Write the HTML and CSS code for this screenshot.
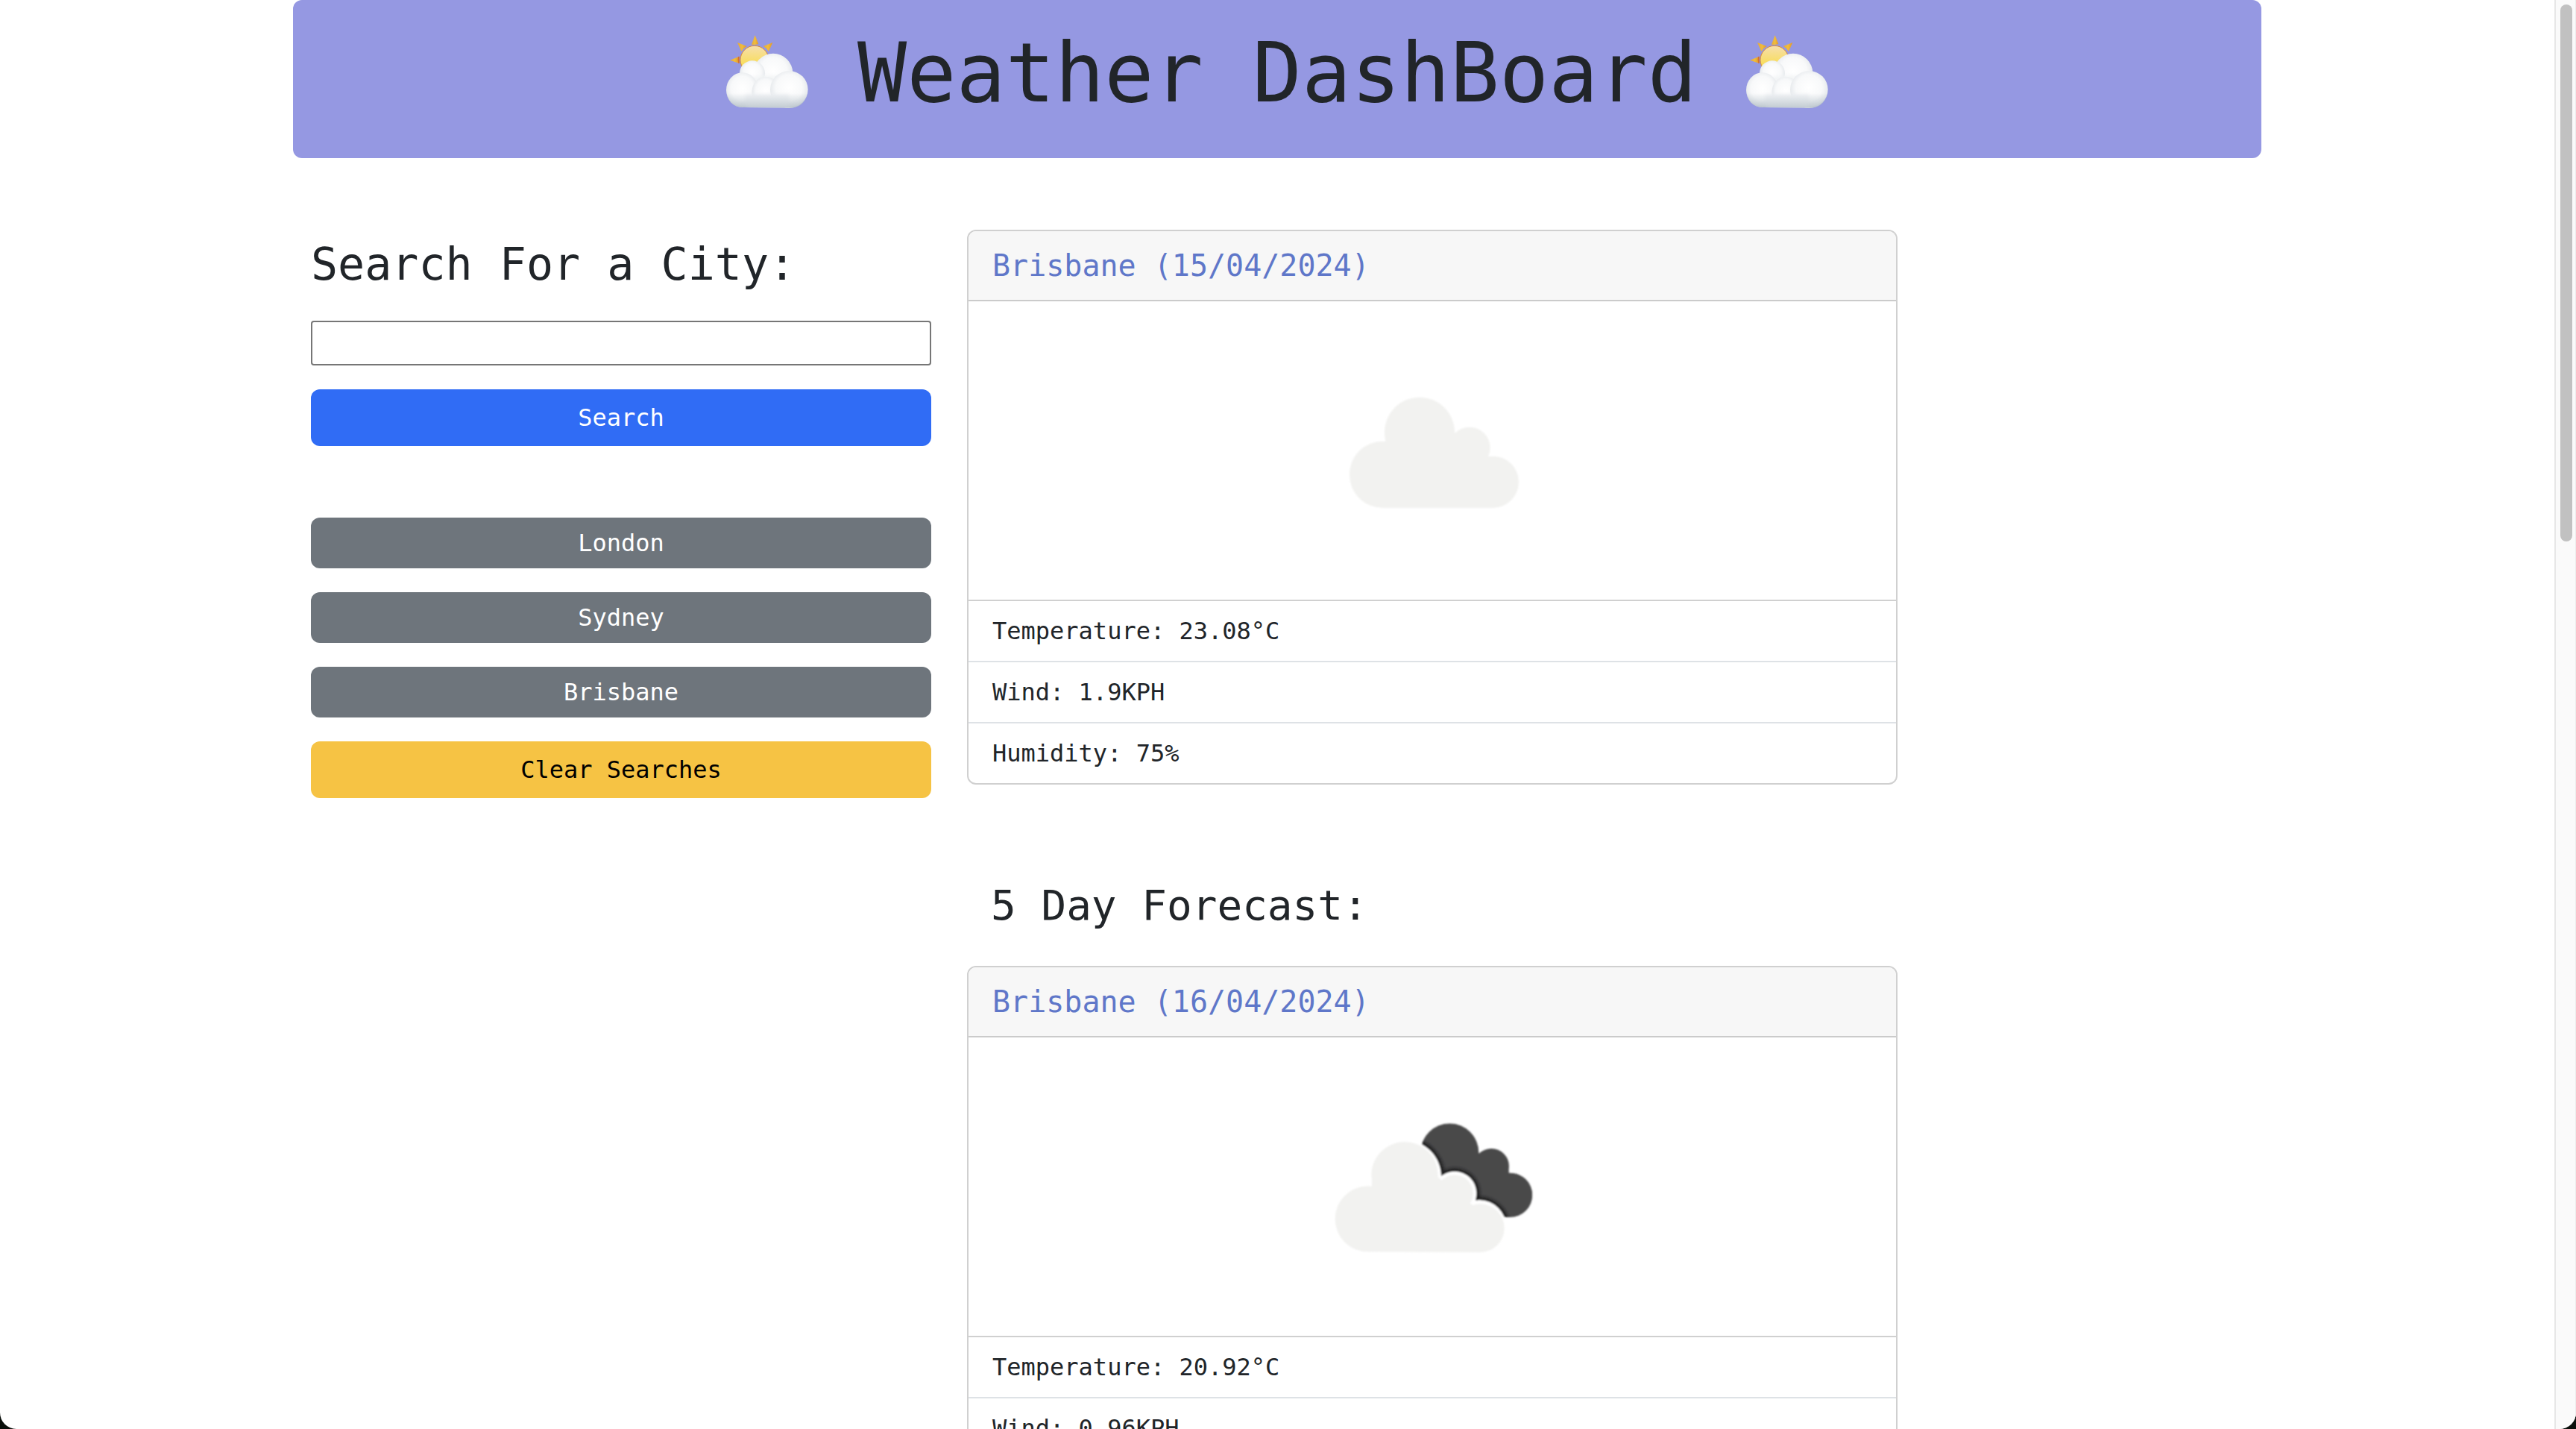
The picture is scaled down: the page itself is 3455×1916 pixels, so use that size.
FILE: index.html
```html
<!DOCTYPE html>
<html lang="en">
<head>
<meta charset="utf-8">
<title>Weather DashBoard</title>
<link rel="stylesheet" href="styles.css">
</head>
<body>
<svg class="defs" aria-hidden="true">
  <defs>
    <radialGradient id="puff" cx="50%" cy="45%" r="58%">
      <stop offset="0" stop-color="#ffffff"/>
      <stop offset=".6" stop-color="#f8f9fa"/>
      <stop offset=".85" stop-color="#e8ebee"/>
      <stop offset="1" stop-color="#ccd4da"/>
    </radialGradient>
    <linearGradient id="shade" x1="0" y1="0" x2="0" y2="1">
      <stop offset="0" stop-color="#b4c0c8" stop-opacity="0"/>
      <stop offset="1" stop-color="#b0bcc4" stop-opacity=".75"/>
    </linearGradient>
    <linearGradient id="sun" x1="0" y1="0" x2="0" y2="1">
      <stop offset="0" stop-color="#f6dfae"/>
      <stop offset=".6" stop-color="#f8dd62"/>
      <stop offset="1" stop-color="#f8e04e"/>
    </linearGradient>
    <linearGradient id="ray" x1="0" y1="0" x2="1" y2="0">
      <stop offset="0" stop-color="#e3a83e"/>
      <stop offset=".5" stop-color="#f0bd3c"/>
      <stop offset="1" stop-color="#e0952c"/>
    </linearGradient>
    <clipPath id="base"><path d="M138 232C100 232 73 263 73 302S100 372 142 372L335 374C375 372 402 342 402 300S372 225 326 225Z"/></clipPath>
    <clipPath id="back-cloud">
      <circle cx="553" cy="196" r="117"/>
      <circle cx="721" cy="251" r="71"/>
      <circle cx="797" cy="367" r="89"/>
      <path d="M553 196H668L721 251L791 262L797 456H600L436 196Z"/>
    </clipPath>
    <filter id="soft" x="-10%" y="-10%" width="120%" height="120%"><feGaussianBlur stdDeviation="3"/></filter>
    <filter id="shadow" x="-10%" y="-10%" width="120%" height="120%"><feGaussianBlur stdDeviation="6"/></filter>
    <symbol id="sun-cloud" viewBox="73 75 330 330">
      <g fill="url(#ray)">
        <path d="M189 82L203 117Q189 122 175 119Z"/>
        <path d="M118 111L156 126Q142 133 134 147Z"/>
        <path d="M260 111L244 147Q236 133 222 126Z"/>
        <path d="M88 182L125 167Q122 181 126 195Z"/>
      </g>
      <path d="M121 168Q118 181 122 194L126 195V167Z" fill="#d5702e"/>
      <circle cx="187" cy="181" r="57" fill="url(#sun)" stroke="#d98a3a" stroke-width="3"/>
      <circle cx="262" cy="234" r="79" fill="url(#puff)"/>
      <circle cx="178" cy="235" r="51" fill="url(#puff)"/>
      <path d="M150 262Q200 235 320 250V340H150Z" fill="#f3f5f6" filter="url(#shadow)"/>
      <ellipse cx="138" cy="302" rx="65" ry="70" fill="url(#puff)"/>
      <ellipse cx="232" cy="310" rx="56" ry="62" fill="url(#puff)"/>
      <ellipse cx="326" cy="300" rx="76" ry="75" fill="url(#puff)"/>
      <g clip-path="url(#base)">
        <path d="M150 318H326V390H150Z" fill="#f1f3f5" filter="url(#shadow)"/>
        <path d="M73 315H402V376H73Z" fill="url(#shade)"/>
      </g>
    </symbol>
  </defs>
</svg>

<div class="viewport">
  <div class="container">
    <header class="banner">
      <h1><svg class="emoji" aria-hidden="true"><use href="#sun-cloud"/></svg> Weather DashBoard <svg class="emoji" aria-hidden="true"><use href="#sun-cloud"/></svg></h1>
    </header>
    <main class="layout">
      <aside class="sidebar">
        <form class="search">
          <h2><label for="city">Search For a City:</label></h2>
          <input id="city" type="text">
          <button class="btn btn-primary" type="button">Search</button>
        </form>
        <div class="history">
          <button class="btn btn-city" type="button">London</button>
          <button class="btn btn-city" type="button">Sydney</button>
          <button class="btn btn-city" type="button">Brisbane</button>
          <button class="btn btn-clear" type="button">Clear Searches</button>
        </div>
      </aside>
      <section class="weather">
        <article class="card">
          <h4 class="card-header">Brisbane (15/04/2024)</h4>
          <svg class="card-icon" viewBox="0 0 400 400" role="img" aria-label="Cloudy">
            <g transform="translate(59 107) scale(.3333)" fill="#f2f2f0" filter="url(#soft)">
              <circle cx="372" cy="206" r="141"/>
              <circle cx="224" cy="376" r="134"/>
              <circle cx="573" cy="268" r="83"/>
              <circle cx="667" cy="406" r="104"/>
              <path d="M224 510V376L234 240V206H513L573 268L649 300L667 406V510Z"/>
            </g>
          </svg>
          <ul class="card-list">
            <li>Temperature: 23.08°C</li>
            <li>Wind: 1.9KPH</li>
            <li>Humidity: 75%</li>
          </ul>
        </article>
        <h3>5 Day Forecast:</h3>
        <article class="card">
          <h4 class="card-header">Brisbane (16/04/2024)</h4>
          <svg class="card-icon" viewBox="0 0 400 400" role="img" aria-label="Broken clouds">
            <g transform="translate(39 89) scale(.3333)">
              <g filter="url(#soft)">
                <g clip-path="url(#back-cloud)">
                  <path d="M400 60H900V480H400Z" fill="#484849"/>
                  <g fill="#161616" filter="url(#shadow)">
                    <circle cx="372" cy="293" r="158"/>
                    <circle cx="573" cy="360" r="99"/>
                    <circle cx="672" cy="496" r="120"/>
                  </g>
                </g>
                <g fill="#fff">
                  <circle cx="372" cy="293" r="147"/>
                  <circle cx="573" cy="360" r="88"/>
                  <circle cx="672" cy="496" r="109"/>
                  <path d="M372 293H519L573 360L658 384L672 496Z"/>
                </g>
              </g>
              <g fill="#f2f2f0" filter="url(#soft)">
                <circle cx="372" cy="287" r="134"/>
                <circle cx="224" cy="463" r="132"/>
                <circle cx="573" cy="360" r="74"/>
                <circle cx="676" cy="500" r="97"/>
                <path d="M224 595V463L240 330V287H500L573 360L643 405L676 500V597Z"/>
              </g>
            </g>
          </svg>
          <ul class="card-list">
            <li>Temperature: 20.92°C</li>
            <li>Wind: 0.96KPH</li>
          </ul>
        </article>
      </section>
    </main>
  </div>
</div>
<div class="scrollbar" aria-hidden="true"><div class="scrollbar-thumb"></div></div>
</body>
</html>
```
FILE: styles.css
```css
* { box-sizing: border-box; }

html { background: #0a0f0b; }

body {
  display: grid;
  grid-template-columns: 1fr 29px;
  height: 100vh;
  margin: 0;
  overflow: hidden;
  border-radius: 0 0 22px 22px;
  background: #fff;
  color: #212529;
  font: 32px/48px Menlo, "DejaVu Sans Mono", monospace;
}

h1, h2, h3, h4, ul { margin: 0; font-weight: 400; }

.defs { position: absolute; width: 0; height: 0; }

.viewport { min-width: 0; overflow: hidden; }

.container { max-width: 2640px; margin: 0 auto; }

.banner {
  padding: 32px 32px 48px;
  border-radius: 12px;
  background: #9598e2;
  text-align: center;
}

.banner h1 { font-size: 110px; line-height: 132px; }

.emoji { width: 110px; height: 110px; vertical-align: -19px; }

.layout {
  display: grid;
  grid-template-columns: 1fr 2fr;
  padding-top: 96px;
}

.sidebar, .weather { padding: 0 24px; }

.sidebar { padding-top: 10px; }

.search, .history {
  display: flex;
  flex-direction: column;
  gap: 32px;
}

.search h2 {
  margin-bottom: 8px;
  font-size: 60px;
  line-height: 72px;
}

.search input {
  height: 60px;
  padding: 2px 4px;
  border: 2px solid #767676;
  border-radius: 4px;
  background: #fff;
  font: inherit;
}

.history { margin-top: 96px; }

.btn {
  padding: 14px 24px;
  border: 0;
  border-radius: 12px;
  color: #fff;
  font: inherit;
}

.btn-primary { background: #306cf5; }

.btn-city { padding: 10px 24px; background: #6e757c; }

.btn-clear { background: #f6c344; color: #000; }

.card {
  display: flex;
  flex-direction: column;
  max-width: 1248px;
  overflow: hidden;
  border: 2px solid #d0d0d0;
  border-radius: 12px;
}

.card-header {
  padding: 16px 32px;
  border-bottom: 2px solid #cbcbcb;
  background: #f7f7f7;
  color: #5f77c9;
  font-size: 40px;
  line-height: 60px;
}

.card-icon { width: 400px; height: 400px; align-self: center; }

.card-list {
  padding: 0;
  border-top: 2px solid #d0d0d0;
  list-style: none;
}

.card-list li { padding: 16px 32px; }

.card-list li + li { border-top: 2px solid #dee2e6; }

.weather h3 {
  padding: 128px 32px 48px;
  font-size: 56px;
  line-height: 67px;
}

.scrollbar {
  padding: 6px 4px 0 6px;
  border-left: 2px solid #e7e7e7;
  border-right: 1px solid #ededed;
  background: #fafafa;
}

.scrollbar-thumb {
  height: 720px;
  border-radius: 8px;
  background: #c1c1c1;
}
```
